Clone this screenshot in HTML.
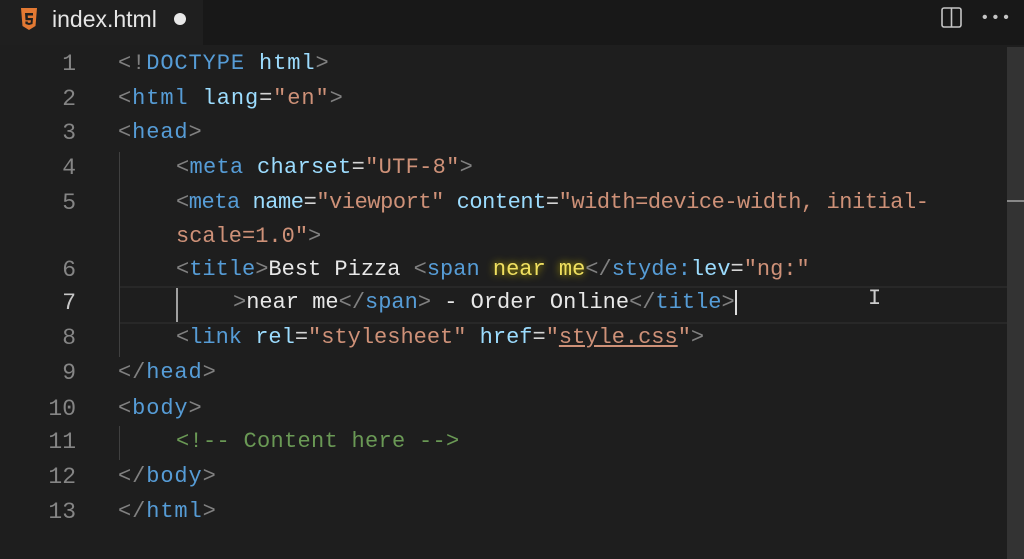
<!DOCTYPE html>
<html><head><style>
body{margin:0;width:1024px;height:559px;background:#1e1e1e;overflow:hidden;position:relative;font-family:"Liberation Mono",monospace;}
.tabbar{position:absolute;left:0;top:0;width:1024px;height:45px;background:#181818;}
.tab{position:absolute;left:0;top:0;width:203px;height:45px;background:#1f1f1f;}
.tabname{position:absolute;left:52px;top:6px;font:23px "Liberation Sans",sans-serif;color:#e6e6e6;}
.dot{position:absolute;left:174px;top:13px;width:12px;height:12px;border-radius:50%;background:#e8e8e8;}
.row{position:absolute;left:118px;height:34px;line-height:34px;font-size:22px;white-space:pre;color:#d4d4d4;}
.i1{left:176px}.i2{left:233px}
.ln{position:absolute;width:76px;text-align:right;left:0;height:34px;line-height:34px;font-size:23px;color:#858585;}
.g{color:#808080}.t{color:#569cd6}.a{color:#9cdcfe}.s{color:#ce9178}.c{color:#6a9955}.w{color:#e8e8e8}
.guide{position:absolute;width:1px;background:#404040;}
</style></head><body>
<div class="tabbar"><div class="tab">
<svg style="position:absolute;left:20px;top:8px" width="18" height="22" viewBox="0 0 18 22"><path d="M1 0h16l-1.5 18L9 22l-6.5-4z" fill="#e37933"/><path d="M5 5h8v2.5H7.7l.2 2.5H13l-.5 6L9 17l-3.5-1-.2-2.5h2.4l.1 1L9 15l1.7-.5.2-2.2H5.5z" fill="#1f1f1f"/></svg>
<div class="tabname">index.html</div><div class="dot"></div></div>
<svg style="position:absolute;left:941px;top:7px" width="21" height="21"><rect x="1" y="1" width="19" height="19" rx="2" fill="none" stroke="#c5c5c5" stroke-width="1.6"/><line x1="10.5" y1="1" x2="10.5" y2="20" stroke="#c5c5c5" stroke-width="1.6"/></svg>
<div style="position:absolute;left:980px;top:15px;color:#c5c5c5;font-size:16px;letter-spacing:1px;line-height:6px">•••</div>
</div>
<div style="position:absolute;left:1007px;top:47px;width:17px;height:512px;background:#333"></div>
<div style="position:absolute;left:1007px;top:200px;width:17px;height:2px;background:#888"></div>
<div style="position:absolute;left:120px;top:286px;width:887px;height:34px;border-top:2px solid #282828;border-bottom:2px solid #282828;"></div>
<div class="guide" style="left:119px;top:152px;height:205px"></div>
<div class="guide" style="left:119px;top:426px;height:34px"></div>
<div class="guide" style="left:176px;top:288px;height:34px;background:#a0a0a0;width:2px"></div>

<div class="ln" style="top:47px">1</div><div class="row" style="top:47px;letter-spacing:0.9px"><span class="g">&lt;!</span><span class="t">DOCTYPE</span> <span class="a">html</span><span class="g">&gt;</span></div>
<div class="ln" style="top:82px">2</div><div class="row" style="top:82px;letter-spacing:0.9px"><span class="g">&lt;</span><span class="t">html</span> <span class="a">lang</span>=<span class="s">"en"</span><span class="g">&gt;</span></div>
<div class="ln" style="top:116px">3</div><div class="row" style="top:116px;letter-spacing:0.9px"><span class="g">&lt;</span><span class="t">head</span><span class="g">&gt;</span></div>
<div class="ln" style="top:151px">4</div><div class="row i1" style="top:151px;letter-spacing:0.3px"><span class="g">&lt;</span><span class="t">meta</span> <span class="a">charset</span>=<span class="s">"UTF-8"</span><span class="g">&gt;</span></div>
<div class="ln" style="top:186px">5</div><div class="row i1" style="top:186px;letter-spacing:-0.45px"><span class="g">&lt;</span><span class="t">meta</span> <span class="a">name</span>=<span class="s">"viewport"</span> <span class="a">content</span>=<span class="s">"width=device-width, initial-</span></div>
<div class="row i1" style="top:220px"><span class="s">scale=1.0"</span><span class="g">&gt;</span></div>
<div class="ln" style="top:253px">6</div><div class="row i1" style="top:253px;letter-spacing:0px"><span class="g">&lt;</span><span class="t">title</span><span class="g">&gt;</span><span class="w">Best Pizza </span><span class="g">&lt;</span><span class="t">span</span> <span style="color:#f0e060;text-shadow:0 0 8px #c8b800">near me</span><span class="g">&lt;/</span><span class="t">styde:</span><span class="a">lev</span>=<span class="s">"ng:"</span></div>
<div class="ln" style="top:286px;color:#c6c6c6">7</div><div class="row i2" style="top:286px"><span class="g">&gt;</span><span class="w">near me</span><span class="g">&lt;/</span><span class="t">span</span><span class="g">&gt;</span><span class="w"> - Order Online</span><span class="g">&lt;/</span><span class="t">title</span><span class="g">&gt;</span><span style="border-left:2px solid #ddd"></span></div>
<div style="position:absolute;left:868px;top:286px;color:#ccc;font-size:22px">I</div>
<div class="ln" style="top:321px">8</div><div class="row i1" style="top:321px"><span class="g">&lt;</span><span class="t">link</span> <span class="a">rel</span>=<span class="s">"stylesheet"</span> <span class="a">href</span>=<span class="s">"<u>style.css</u>"</span><span class="g">&gt;</span></div>
<div class="ln" style="top:356px">9</div><div class="row" style="top:356px;letter-spacing:0.9px"><span class="g">&lt;/</span><span class="t">head</span><span class="g">&gt;</span></div>
<div class="ln" style="top:392px">10</div><div class="row" style="top:392px;letter-spacing:0.9px"><span class="g">&lt;</span><span class="t">body</span><span class="g">&gt;</span></div>
<div class="ln" style="top:425px">11</div><div class="row i1" style="top:425px;letter-spacing:0.3px"><span class="c">&lt;!-- Content here --&gt;</span></div>
<div class="ln" style="top:460px">12</div><div class="row" style="top:460px;letter-spacing:0.9px"><span class="g">&lt;/</span><span class="t">body</span><span class="g">&gt;</span></div>
<div class="ln" style="top:495px">13</div><div class="row" style="top:495px;letter-spacing:0.9px"><span class="g">&lt;/</span><span class="t">html</span><span class="g">&gt;</span></div>
</body></html>
